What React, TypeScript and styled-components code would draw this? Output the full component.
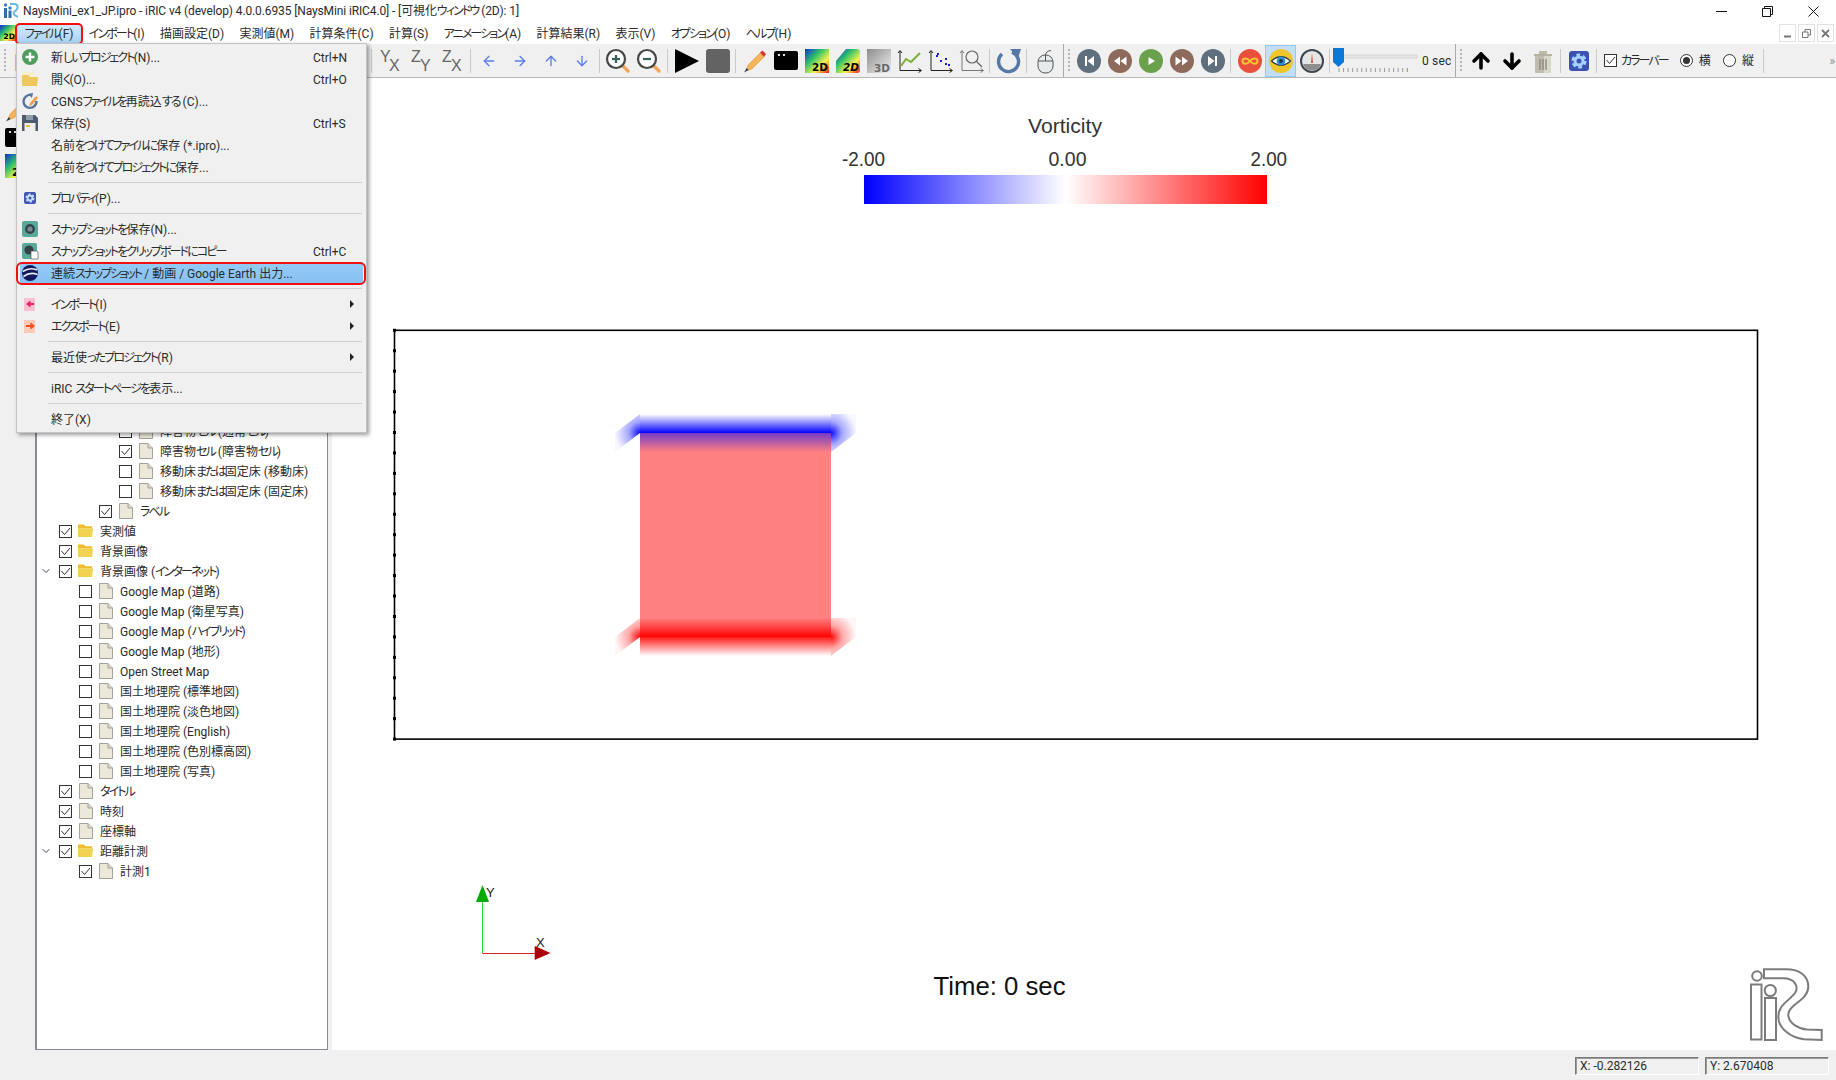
import React from "react";
import styled, { createGlobalStyle } from "styled-components";
import { ArrowDown, ArrowLeft, ArrowRight, ArrowUp, ChevronDown } from "lucide-react";

const Global = createGlobalStyle`
  html, body { margin: 0; padding: 0; background: #f0f0f0; overflow: hidden; }
  body {
    font-family: Roboto, "Noto Sans CJK JP", sans-serif;
    font-size: 12px;
    line-height: 16px;
    font-feature-settings: "palt";
    color: #2b2b2b;
  }
`;

const Page = styled.div`
  position: relative; width: 1836px; height: 1080px; display: flex; flex-direction: column; overflow: hidden;
`;
const KanaRun = styled.span`
  letter-spacing: -1.9px;
`;
const TitleBar = styled.div`
  height: 22px; background: #fff; display: flex; align-items: center; flex: none; padding-left: 3px;
`;
const TitleText = styled.span`
  margin-left: 4px; white-space: nowrap; letter-spacing: -0.12px;
`;
const WinControls = styled.div`
  margin-left: auto; display: flex; align-items: center; height: 22px;
`;
const WinBtn = styled.div`
  width: 46px; height: 20px; display: flex; align-items: center; justify-content: center; color: #111;
`;
const MenuBar = styled.div`
  height: 22px; background: #fff; display: flex; align-items: center; flex: none;
`;
const MenuBarIcon = styled.div`
  width: 17px; height: 22px; flex: none; display: flex; align-items: center;
`;
const MenuTitle = styled.div<{ $on?: boolean }>`
  position: relative; height: 18px; line-height: 18px; padding: 0 7.65px; white-space: nowrap; margin-top: 1px;
  ${(p) => p.$on && `
    background: linear-gradient(#d4e9fb, #a9d2f4);
    &::after { content: ""; position: absolute; inset: -2px -2px -2px -2px; border: 2px solid #f01010; border-radius: 5px; }
  `}
`;
const MdiBtns = styled.div`
  margin-left: auto; margin-right: 2px; display: flex; gap: 2px;
`;
const MdiBtn = styled.div`
  width: 15px; height: 16px; border: 1px solid #e2e2e2; display: flex; align-items: center; justify-content: center; background: #fff;
`;
const ToolBar = styled.div`
  height: 33px; flex: none; background: #f0f0f0; border-bottom: 1px solid #b9b9b9; display: flex; align-items: center; position: relative;
`;
const HiddenGroup = styled.div`
  width: 369px; height: 100%; flex: none; display: flex; align-items: center;
`;
const Grip = styled.div<{ $w: number }>`
  width: ${(p) => p.$w}px; height: 24px; flex: none; position: relative;
  &::before {
    content: ""; position: absolute; left: 4px; top: 0; width: 2px; height: 24px;
    background: repeating-linear-gradient(#b8b8b8 0 2px, transparent 2px 4px);
  }
`;
const ToolBtn = styled.div<{ $active?: boolean }>`
  width: 31px; height: 32px; flex: none; display: flex; align-items: center; justify-content: center; box-sizing: border-box;
  ${(p) => p.$active && `background: #c3def5; border: 1px solid #91c9f7;`}
`;
const Sep = styled.div<{ $l?: number; $r?: number }>`
  width: 1px; height: 24px; flex: none; background: #c9c9c9;
  margin-left: ${(p) => p.$l ?? 2}px; margin-right: ${(p) => p.$r ?? 3}px;
`;
const Break = styled.div`
  width: 1px; height: 33px; flex: none; background: #a9a9a9; margin-left: 2px;
`;
const SecLabel = styled.div`
  width: 31px; flex: none; white-space: nowrap; text-align: left; letter-spacing: 0.2px;
`;
const CheckLabel = styled.label`
  display: flex; align-items: center; gap: 4px; white-space: nowrap; flex: none;
`;
const RadioLabel = styled(CheckLabel)`
  gap: 6px;
`;
const Box = styled.span`
  width: 13px; height: 13px; border: 1px solid #333; box-sizing: border-box; background: #fff; flex: none; display: inline-flex; align-items: center; justify-content: center;
`;
const Radio = styled.span<{ $on?: boolean }>`
  width: 13px; height: 13px; border: 1px solid #333; border-radius: 50%; box-sizing: border-box; background: #fff; flex: none; position: relative;
  ${(p) => p.$on && `&::after { content: ""; position: absolute; inset: 2px; border-radius: 50%; background: #333; }`}
`;
const ColorOpts = styled.div`
  display: flex; align-items: center; margin-left: 4px; gap: 12px; flex: none; width: 157px;
`;
const More = styled.div`
  margin-left: auto; margin-right: 2px; color: #888; font-size: 12px; letter-spacing: -1px;
`;
const Main = styled.div`
  flex: 1; display: flex; min-height: 0;
`;
const Dock = styled.div`
  width: 35px; flex: none; background: #f0f0f0; display: flex; flex-direction: column; gap: 4px; padding: 20px 0 0 5px; box-sizing: border-box;
`;
const TreePanel = styled.div`
  width: 293px; flex: none; margin-top: 12px; background: #fff; box-sizing: border-box;
  border: 1px solid #8b8b95; border-left-width: 2px; padding-top: 330px;
`;
const Strip = styled.div`
  width: 4px; flex: none; background: #f0f0f0;
`;
const Canvas = styled.div`
  flex: 1; background: #fff; min-width: 0;
`;
const PlotSvg = styled.svg`
  display: block; width: 100%; height: 100%;
`;
const Row = styled.div<{ $level: number }>`
  height: 20px; display: flex; align-items: center; padding-left: ${(p) => (p.$level - 1) * 20}px; white-space: nowrap;
`;
const Chevron = styled.span`
  width: 22px; flex: none; display: flex; justify-content: flex-start; padding-left: 3px; box-sizing: border-box; color: #444;
`;
const RowIcon = styled.span`
  width: 15px; margin: 0 7px 0 6px; flex: none; display: flex; justify-content: center;
`;
const StatusBar = styled.div`
  height: 30px; flex: none; background: #f0f0f0; display: flex; justify-content: flex-end; gap: 6px; padding: 7px 7px 0 0; box-sizing: border-box;
`;
const StatusField = styled.div`
  width: 124px; height: 18px; box-sizing: border-box; border: 1px solid; border-color: #7a7a7a #fff #fff #7a7a7a; outline: 0;
  box-shadow: inset 1px 1px 0 #9a9a9a; line-height: 16px; padding-left: 4px; white-space: nowrap;
`;
const Menu = styled.div`
  position: absolute; left: 16px; top: 43px; width: 351px; box-sizing: border-box; background: #f0f0f0;
  border: 1px solid #c4c4c4; box-shadow: 2px 2px 4px rgba(0,0,0,.4); padding: 2px 3px 2px 3px; z-index: 5;
`;
const MenuItem = styled.div<{ $hi?: boolean }>`
  position: relative; height: 22px; display: flex; align-items: center; white-space: nowrap;
  ${(p) => p.$hi && `
    background: linear-gradient(#95cbf7, #86c1f2);
    &::after { content: ""; position: absolute; inset: 0 -3px -1px -4px; border: 2px solid #f01010; border-radius: 6px; }
  `}
`;
const Label = styled.span`
  white-space: nowrap; margin-top: 2px;
`;
const MenuIconSlot = styled.span`
  width: 16px; height: 16px; margin: 0 13px 0 2px; flex: none; display: flex; align-items: center; justify-content: center;
`;
const Shortcut = styled.span`
  margin-left: auto; width: 50px; flex: none; margin-top: 1px;
`;
const SubArrow = styled.span`
  margin-left: auto; margin-right: 9px; width: 0; height: 0; flex: none;
  border-left: 4px solid #222; border-top: 4px solid transparent; border-bottom: 4px solid transparent;
`;
const MenuSep = styled.div`
  height: 9px; display: flex; align-items: center; padding: 0 1px 0 28px;
  &::before { content: ""; flex: 1; height: 1px; background: #cfcfcf; }
`;

/* Kana runs are set tighter than the CJK font's own metrics, as in the original UI font. */
const T = ({ children }: { children: string }) => (
  <>
    {children.split(/([\u3040-\u30ff]+)/).map((part, i) =>
      /[\u3040-\u30ff]/.test(part) ? <KanaRun key={i}>{part}</KanaRun> : part
    )}
  </>
);

/* ---------- icons ---------- */
const Svg = ({ s = 24, children }: { s?: number; children: React.ReactNode }) => (
  <svg width={s} height={s} viewBox={`0 0 ${s} ${s}`} style={{ display: "block", flex: "none", overflow: "visible" }}>{children}</svg>
);
const Defs = () => (
  <svg width="0" height="0" style={{ position: "absolute" }}>
    <defs>
      <linearGradient id="rainbow" x1="0" y1="0" x2="1" y2="1">
        <stop offset="0" stopColor="#1428d8" />
        <stop offset=".35" stopColor="#2cc06a" />
        <stop offset=".68" stopColor="#f6f44c" />
        <stop offset="1" stopColor="#f01a1a" />
      </linearGradient>
      <linearGradient id="gray3d" x1="0" y1="0" x2="1" y2="1">
        <stop offset="0" stopColor="#8c8c8c" />
        <stop offset="1" stopColor="#f0f0f0" />
      </linearGradient>
    </defs>
  </svg>
);
const AxisPair = ({ a, b }: { a: string; b: string }) => (
  <Svg>
    <text x="1" y="13" fontFamily="Liberation Sans, sans-serif" fontSize="16" fill="#666">{a}</text>
    <text x="10" y="22" fontFamily="Liberation Sans, sans-serif" fontSize="16" fill="#666">{b}</text>
  </Svg>
);
const ZoomIcon = ({ plus }: { plus?: boolean }) => (
  <Svg>
    <line x1="15" y1="15" x2="22" y2="22" stroke="#f0a95c" strokeWidth="3.4" strokeLinecap="round" />
    <circle cx="10" cy="10" r="9" fill="#fff" stroke="#474747" strokeWidth="2.2" />
    <line x1="6" y1="10" x2="14" y2="10" stroke="#37605a" strokeWidth="2.2" />
    {plus && <line x1="10" y1="6" x2="10" y2="14" stroke="#37605a" strokeWidth="2.2" />}
  </Svg>
);
const PencilIcon = () => (
  <Svg>
    <path d="M5 16 L17 4 L21 8 L9 20 L3 22 Z" fill="#f5b35c" stroke="#e59a3e" strokeWidth=".6" />
    <path d="M17 3.5 L19.5 1.5 L23 5 L21 8 Z" fill="#d8352d" />
    <path d="M3.8 19 L5.5 21 L1 23.5 Z" fill="#2c3e50" />
  </Svg>
);
const TermIcon = () => (
  <Svg>
    <rect x="0" y="2" width="24" height="19" rx="2" fill="#000" />
    <rect x="4" y="5" width="2" height="2" fill="#ddd" />
    <rect x="9" y="5" width="2" height="2" fill="#ddd" />
  </Svg>
);
const Grad2D = () => (
  <Svg>
    <rect x="0" y="0" width="24" height="24" fill="url(#rainbow)" />
    <text x="23" y="22" textAnchor="end" fontFamily="DejaVu Sans, sans-serif" fontWeight="700" fontSize="10.5" fill="#000">2D</text>
  </Svg>
);
const Grad2DItalic = () => (
  <Svg>
    <path d="M0 12 L10 0 H21 Q24 0 24 3 V21 Q24 24 21 24 H0 Z" fill="url(#rainbow)" />
    <text x="23" y="22" textAnchor="end" fontFamily="DejaVu Sans, sans-serif" fontStyle="italic" fontWeight="700" fontSize="10.5" fill="#000">2D</text>
  </Svg>
);
const Grad3D = () => (
  <Svg>
    <rect x="0" y="0" width="24" height="24" fill="url(#gray3d)" />
    <text x="23" y="23" textAnchor="end" fontFamily="DejaVu Sans, sans-serif" fontWeight="700" fontSize="10.5" fill="#6a6a6a">3D</text>
  </Svg>
);
const Axes = ({ c = "#222" }: { c?: string }) => (
  <g fill="none" stroke={c} strokeWidth="1">
    <path d="M2 2 V21.5 H23" />
    <path d="M0 4 L2 1.5 L4 4 M20.5 19.5 L23.5 21.5 L20.5 23.5" />
  </g>
);
const LineChart = () => (
  <Svg><Axes /><path d="M3 17 L8 10 L13 13 L22 4" fill="none" stroke="#7ab03a" strokeWidth="2" /></Svg>
);
const Scatter = () => (
  <Svg>
    <Axes />
    {[[7, 6], [11, 11], [16, 9], [16, 14], [19, 15], [8, 4]].map(([x, y], i) => (
      <rect key={i} x={x} y={y} width="2" height="2" fill="#1a1ae0" />
    ))}
  </Svg>
);
const ZoomChart = () => (
  <Svg>
    <Axes c="#777" />
    <circle cx="12" cy="8" r="6" fill="none" stroke="#666" strokeWidth="1.2" />
    <line x1="16" y1="12" x2="22" y2="18" stroke="#666" strokeWidth="1.2" />
  </Svg>
);
const RotateIcon = () => (
  <Svg>
    <path d="M15 3.2 A10 10 0 1 1 5 5" fill="none" stroke="#5578a8" strokeWidth="3.4" />
    <path d="M13 0 L24 0 L21 9 Z" fill="#5578a8" />
  </Svg>
);
const MouseIcon = () => (
  <Svg>
    <rect x="4" y="6" width="15" height="18" rx="7" fill="#e6ecec" stroke="#555" strokeWidth="1" />
    <path d="M4 12 H19 M11.5 6 V12 M11.5 6 Q12 2 17 1.5" fill="none" stroke="#555" strokeWidth="1" />
  </Svg>
);
const Player = ({ c, kind }: { c: string; kind: string }) => (
  <Svg>
    <circle cx="12" cy="12" r="12" fill={c} />
    {kind === "first" && <path d="M8 7 H10 V17 H8 Z M17 7 V17 L10.5 12 Z" fill="#fff" />}
    {kind === "last" && <path d="M14 7 H16 V17 H14 Z M7 7 V17 L13.5 12 Z" fill="#fff" />}
    {kind === "rew" && <path d="M12 7.5 V16.5 L6 12 Z M18.5 7.5 V16.5 L12.5 12 Z" fill="#fff" />}
    {kind === "fwd" && <path d="M5.5 7.5 V16.5 L11.5 12 Z M12 7.5 V16.5 L18 12 Z" fill="#fff" />}
    {kind === "play" && <path d="M9.5 8 V16 L16 12 Z" fill="#fff" />}
  </Svg>
);
const Infinity2 = () => (
  <Svg>
    <circle cx="12" cy="12" r="12" fill="#e94f3d" />
    <path d="M12 12 C9.5 8.5 4.5 8.5 4.5 12 C4.5 15.5 9.5 15.5 12 12 C14.5 8.5 19.5 8.5 19.5 12 C19.5 15.5 14.5 15.5 12 12 Z" fill="none" stroke="#f2c531" strokeWidth="2" />
  </Svg>
);
const EyeIcon = () => (
  <Svg>
    <circle cx="12" cy="12" r="12" fill="#eec62c" />
    <path d="M2.5 12 Q12 3.5 21.5 12 Q12 20.5 2.5 12 Z" fill="#fff" stroke="#2d3e50" strokeWidth="1.2" />
    <circle cx="12" cy="12" r="4.4" fill="#2f8fc8" />
    <circle cx="12" cy="12" r="2" fill="#1d3a55" />
  </Svg>
);
const Gauge = () => (
  <Svg>
    <circle cx="12" cy="12" r="11" fill="#e6e6e6" stroke="#3b4650" strokeWidth="2" />
    <path d="M3 15 A9.5 9.5 0 0 0 21 15 Z" fill="#8d8d8d" />
    <path d="M11 14 L12 4 L13 14 Z" fill="#e04535" />
  </Svg>
);
const SliderArt = () => (
  <svg width="89" height="32" viewBox="0 0 89 32" style={{ display: "block", flex: "none" }}>
    <rect x="8" y="10" width="76" height="3" fill="#e6e6e6" stroke="#d4d4d4" />
    {Array.from({ length: 16 }, (_, i) => (
      <line key={i} x1={6 + i * 4.55} y1="23" x2={6 + i * 4.55} y2="27" stroke={i === 15 ? "#8a8a70" : "#9a9a9a"} />
    ))}
    <path d="M0 3 H11 V17 L5.5 22 L0 17 Z" fill="#0a78d7" />
  </svg>
);
const Trash = () => (
  <Svg>
    <rect x="3" y="5" width="18" height="2" fill="#b5b2a2" />
    <rect x="8" y="2" width="8" height="3" fill="#bdbaaa" />
    <path d="M4 7 H20 V23 Q20 24 19 24 H5 Q4 24 4 23 Z" fill="#dad8c8" />
    <path d="M4 7 H13 V24 H5 Q4 24 4 23 Z" fill="#c0bdaf" />
    <path d="M9 10 V21 M12 10 V21 M15 10 V21" stroke="#8d8b7c" strokeWidth="1.4" />
  </Svg>
);
const GearMark = ({ c, r }: { c: string; r: number }) => (
  <g fill="none" stroke={c}>
    <circle r={r} strokeWidth={r * 0.75} />
    <circle r={r * 1.6} strokeWidth={r * 0.6} strokeDasharray={`${r * 0.95} ${r * 0.72}`} />
  </g>
);
const GearIcon = () => (
  <Svg><rect x="1" y="1" width="20" height="20" rx="3" fill="#3c52b2" transform="translate(1 1)" /><g transform="translate(12 12)"><GearMark c="#a6d4ff" r={4} /></g></Svg>
);
const FolderBig = () => (
  <Svg>
    <path d="M1 5 H9 L11 7 H22 V22 H1 Z" fill="#e9c35a" />
  </Svg>
);
const MiniMdi = () => (
  <svg width="16" height="16" viewBox="0 0 16 16" style={{ display: "block" }}>
    <rect width="16" height="16" fill="url(#rainbow)" />
    <text x="15" y="14" textAnchor="end" fontFamily="DejaVu Sans, sans-serif" fontWeight="700" fontSize="7.5" fill="#000">2D</text>
  </svg>
);
const AppLogo = () => (
  <svg width="16" height="18" viewBox="0 0 16 18" style={{ display: "block" }}>
    <circle cx="2.5" cy="3" r="1.7" fill="#3a7ebf" />
    <rect x="1" y="6" width="3" height="10" fill="#2f6fa8" />
    <circle cx="7" cy="6" r="1.7" fill="#3a7ebf" />
    <rect x="5.5" y="8.5" width="3" height="7.5" fill="#2f6fa8" />
    <path d="M7 2 H11 Q15 2 14.5 6 Q14 8 11 10 Q10 12 12 13.5 L15 15" fill="none" stroke="#6bb9e0" strokeWidth="2" />
  </svg>
);
const S = 16;
const NewIcon = () => (
  <Svg s={S}><circle cx="8" cy="8" r="8" fill="#4f9d5e" /><path d="M8 3.5 V12.5 M3.5 8 H12.5" stroke="#fff" strokeWidth="2.4" /></Svg>
);
const OpenIcon = () => (
  <Svg s={S}>
    <path d="M2 1 H12 V8 H2 Z" fill="#f5eecf" />
    <path d="M0 4 H6 L8 6 H16 L15 15 H0 Z" fill="#eec85e" />
  </Svg>
);
const ReloadIcon = () => (
  <Svg s={S}>
    <path d="M9 2 A6.5 6.5 0 1 0 14.5 8" fill="none" stroke="#56759a" strokeWidth="2.4" />
    <path d="M6 1 L11 0 L10 5 Z" fill="#56759a" />
    <path d="M8 10 L14 3 L16 5 L10 12 L7 13 Z" fill="#f0a050" />
  </Svg>
);
const SaveIcon = () => (
  <Svg s={S}>
    <path d="M0 0 H13 L16 3 V16 H0 Z" fill="#4c5c6e" />
    <rect x="4" y="0" width="7" height="5" fill="#8f9dab" />
    <rect x="2.5" y="8" width="11" height="8" fill="#eeeeea" />
    <rect x="4" y="10" width="4" height="2" fill="#e8b94a" />
  </Svg>
);
const PropIcon = () => (
  <Svg s={S}>
    <rect x="1" y="1" width="12" height="12" rx="2" fill="#4156b5" transform="translate(1 1)" />
    <g transform="translate(8 8)"><GearMark c="#c5e2ff" r={2.4} /></g>
  </Svg>
);
const SnapIcon = () => (
  <Svg s={S}>
    <rect width="16" height="16" rx="2" fill="#59a99b" />
    <circle cx="8" cy="8" r="5" fill="#37424a" />
    <circle cx="8" cy="8" r="2.6" fill="#7a8a94" />
  </Svg>
);
const SnapCopyIcon = () => (
  <Svg s={S}>
    <rect width="15" height="16" rx="2" fill="#59a99b" />
    <circle cx="7" cy="7" r="4.6" fill="#37424a" />
    <path d="M9 8 H15 L16 9 V16 H9 Z" fill="#fff" stroke="#444" strokeWidth=".6" />
  </Svg>
);
const GlobeIcon = () => (
  <Svg s={S}>
    <circle cx="8" cy="8" r="8" fill="#12195e" />
    <path d="M0.8 6.5 Q7.5 2 15 5 M1.5 11.5 Q8 6.5 15.5 9.5" fill="none" stroke="#e4eaf6" strokeWidth="1.6" />
  </Svg>
);
const ImportIcon = () => (
  <Svg s={S}>
    <rect x="2" y="2" width="11" height="13" fill="#f9c0d0" />
    <path d="M12 8 H6 M8.5 5.5 L5.5 8 L8.5 10.5" fill="none" stroke="#e8246a" strokeWidth="1.8" />
  </Svg>
);
const ExportIcon = () => (
  <Svg s={S}>
    <rect x="2" y="2" width="11" height="13" fill="#ffc9b8" />
    <path d="M4 8 H11 M8.5 5.5 L11.5 8 L8.5 10.5" fill="none" stroke="#f4511e" strokeWidth="1.8" />
  </Svg>
);
const FileIcon = () => (
  <svg width="14" height="16" viewBox="0 0 14 16" style={{ display: "block" }}>
    <path d="M.5 .5 H9 L13.5 5 V15.5 H.5 Z" fill="#ece9da" stroke="#a3a39a" />
    <path d="M9 .5 V5 H13.5" fill="#dcd9ca" stroke="#a3a39a" />
  </svg>
);
const FolderIcon = () => (
  <svg width="16" height="14" viewBox="0 0 16 14" style={{ display: "block" }}>
    <path d="M0 0 H6 L8 2 H15 V4 H0 Z" fill="#eebc2e" />
    <path d="M0 4 H16 L15 13.5 H0 Z" fill="#f3d152" />
  </svg>
);
const CheckMark = () => (
  <svg width="11" height="11" viewBox="0 0 11 11" style={{ display: "block" }}>
    <path d="M1.5 5 L4.5 8.5 L10 2" fill="none" stroke="#333" strokeWidth="1" />
  </svg>
);

/* ---------- data ---------- */
type TreeRow = { t: string; l: number; on?: boolean; folder?: boolean; open?: boolean };
const tree: TreeRow[] = [
  { t: "障害物セル (通常セル)", l: 4 },
  { t: "障害物セル (障害物セル)", l: 4, on: true },
  { t: "移動床または固定床 (移動床)", l: 4 },
  { t: "移動床または固定床 (固定床)", l: 4 },
  { t: "ラベル", l: 3, on: true },
  { t: "実測値", l: 1, on: true, folder: true },
  { t: "背景画像", l: 1, on: true, folder: true },
  { t: "背景画像 (インターネット)", l: 1, on: true, folder: true, open: true },
  { t: "Google Map (道路)", l: 2 },
  { t: "Google Map (衛星写真)", l: 2 },
  { t: "Google Map (ハイブリッド)", l: 2 },
  { t: "Google Map (地形)", l: 2 },
  { t: "Open Street Map", l: 2 },
  { t: "国土地理院 (標準地図)", l: 2 },
  { t: "国土地理院 (淡色地図)", l: 2 },
  { t: "国土地理院 (English)", l: 2 },
  { t: "国土地理院 (色別標高図)", l: 2 },
  { t: "国土地理院 (写真)", l: 2 },
  { t: "タイトル", l: 1, on: true },
  { t: "時刻", l: 1, on: true },
  { t: "座標軸", l: 1, on: true },
  { t: "距離計測", l: 1, on: true, folder: true, open: true },
  { t: "計測1", l: 2, on: true },
];
const menus = ["インポート(I)", "描画設定(D)", "実測値(M)", "計算条件(C)", "計算(S)", "アニメーション(A)", "計算結果(R)", "表示(V)", "オプション(O)", "ヘルプ(H)"];

const gridTicks = Array.from({ length: 21 }, (_, i) => 330.3 + i * 20.44);

const Band = ({ y, id, c, under }: { y: number; id: string; c: string; under: number }) => (
  <g>
    <defs>
      <linearGradient id={`${id}a`} gradientUnits="userSpaceOnUse" x1="0" y1={y - 19} x2="0" y2={y}>
        <stop offset="0" stopColor={c} stopOpacity="0" />
        <stop offset="1" stopColor={c} stopOpacity="1" />
      </linearGradient>
      <linearGradient id={`${id}b`} gradientUnits="userSpaceOnUse" x1="0" y1={y} x2="0" y2={y + 19}>
        <stop offset="0" stopColor={c} stopOpacity={under} />
        <stop offset="1" stopColor={c} stopOpacity="0" />
      </linearGradient>
      <radialGradient id={`${id}l`} gradientUnits="userSpaceOnUse" cx="640" cy={y} r="25">
        <stop offset="0" stopColor={c} stopOpacity=".95" />
        <stop offset=".45" stopColor={c} stopOpacity=".35" />
        <stop offset="1" stopColor={c} stopOpacity=".03" />
      </radialGradient>
      <radialGradient id={`${id}r`} gradientUnits="userSpaceOnUse" cx="831" cy={y} r="25">
        <stop offset="0" stopColor={c} stopOpacity=".95" />
        <stop offset=".45" stopColor={c} stopOpacity=".35" />
        <stop offset="1" stopColor={c} stopOpacity=".03" />
      </radialGradient>
    </defs>
    <rect x="640" y={y - 19} width="191" height="19" fill={`url(#${id}a)`} />
    <rect x="640" y={y} width="191" height="19" fill={`url(#${id}b)`} />
    <polygon points={`640,${y} 640,${y - 19} 615,${y} 615,${y + 19}`} fill={`url(#${id}l)`} />
    <polygon points={`831,${y} 831,${y - 19} 856,${y - 19} 856,${y} 831,${y + 19}`} fill={`url(#${id}r)`} />
  </g>
);

const vtkFont = "Liberation Sans, sans-serif";

const Plot = () => (
  <PlotSvg viewBox="332 78 1504 972">
    <defs>
      <linearGradient id="cbar">
        <stop offset="0" stopColor="#00f" />
        <stop offset=".5" stopColor="#fff" />
        <stop offset="1" stopColor="#f00" />
      </linearGradient>
    </defs>
    <text x="1028" y="133" fontFamily={vtkFont} fontSize="20" fill="#333" textLength="74" lengthAdjust="spacingAndGlyphs">Vorticity</text>
    <text x="842" y="166" fontFamily={vtkFont} fontSize="20" fill="#333" textLength="43" lengthAdjust="spacingAndGlyphs">-2.00</text>
    <text x="1048.5" y="166" fontFamily={vtkFont} fontSize="20" fill="#333" textLength="38" lengthAdjust="spacingAndGlyphs">0.00</text>
    <text x="1250.5" y="166" fontFamily={vtkFont} fontSize="20" fill="#333" textLength="36.5" lengthAdjust="spacingAndGlyphs">2.00</text>
    <rect x="864" y="175" width="403" height="29" fill="url(#cbar)" />

    <rect x="640" y="433" width="191" height="204" fill="#ff8080" />
    <Band y={433} id="bandB" c="#0000ff" under={0.55} />
    <Band y={637} id="bandR" c="#ff0000" under={0.9} />

    <rect x="394.5" y="330.3" width="1363" height="408.8" fill="none" stroke="#000" strokeWidth="1.6" />
    {gridTicks.map((y) => (
      <rect key={y} x="393" y={y - 1.5} width="3" height="3" fill="#000" />
    ))}

    <line x1="482.5" y1="953" x2="482.5" y2="902" stroke="#22dd22" strokeWidth="1" />
    <polygon points="482.5,885 489,902 476,902" fill="#00aa00" />
    <line x1="482.5" y1="953.5" x2="535" y2="953.5" stroke="#dd2222" strokeWidth="1" />
    <polygon points="550.5,953 534.7,946 534.7,960" fill="#aa0000" />
    <text x="486" y="897" fontFamily={vtkFont} fontSize="13" fill="#222">Y</text>
    <text x="536" y="947" fontFamily={vtkFont} fontSize="13" fill="#222">X</text>

    <text x="933.5" y="995" fontFamily={vtkFont} fontSize="25" fill="#111" textLength="132" lengthAdjust="spacingAndGlyphs">Time: 0 sec</text>

    <g fill="#fff" stroke="#7c7c7c" strokeWidth="2">
      <path d="M1764 969.3 H1786 C1800 969.3 1808.3 976 1808.3 986.7 C1808.3 996 1799 1001 1793.3 1006 C1789 1010 1787.5 1013 1788.5 1016.5 C1790 1024 1799 1029 1807 1029.5 L1821.7 1030 V1040 L1804 1039.3 C1790 1037.5 1778.3 1028 1778.3 1016.7 C1778.3 1005 1789 1001 1795 993 C1799 987 1795 978.3 1783.3 978.3 H1764 Z" />
      <circle cx="1757" cy="976" r="4.8" />
      <rect x="1751" y="984.5" width="10.5" height="55" />
      <circle cx="1770.3" cy="990.5" r="5.6" />
      <rect x="1765" y="998" width="11" height="42" />
    </g>
  </PlotSvg>
);

const App = () => (
  <Page>
    <Global />
    <Defs />
    <TitleBar>
      <AppLogo />
      <TitleText><T>NaysMini_ex1_JP.ipro - iRIC v4 (develop) 4.0.0.6935 [NaysMini iRIC4.0] - [可視化ウィンドウ (2D): 1]</T></TitleText>
      <WinControls>
        <WinBtn>
          <svg width="11" height="11" viewBox="0 0 11 11"><path d="M0 5.5 H11" stroke="#111" /></svg>
        </WinBtn>
        <WinBtn>
          <svg width="11" height="11" viewBox="0 0 11 11"><path d="M.5 2.5 H8.5 V10.5 H.5 Z M2.5 2.5 V.5 H10.5 V8.5 H8.5" fill="none" stroke="#111" /></svg>
        </WinBtn>
        <WinBtn>
          <svg width="11" height="11" viewBox="0 0 11 11"><path d="M.5 .5 L10.5 10.5 M10.5 .5 L.5 10.5" stroke="#111" /></svg>
        </WinBtn>
      </WinControls>
    </TitleBar>

    <MenuBar>
      <MenuBarIcon><MiniMdi /></MenuBarIcon>
      <MenuTitle $on><T>ファイル(F)</T></MenuTitle>
      {menus.map((m) => (
        <MenuTitle key={m}><T>{m}</T></MenuTitle>
      ))}
      <MdiBtns>
        <MdiBtn><svg width="9" height="9" viewBox="0 0 9 9"><path d="M1 7.5 H8" stroke="#777" strokeWidth="2" /></svg></MdiBtn>
        <MdiBtn><svg width="9" height="9" viewBox="0 0 9 9"><path d="M.5 3 H6 V8.5 H.5 Z M3 3 V.5 H8.5 V6 H6" fill="none" stroke="#777" /></svg></MdiBtn>
        <MdiBtn><svg width="9" height="9" viewBox="0 0 9 9"><path d="M1 1 L8 8 M8 1 L1 8" stroke="#777" strokeWidth="1.8" /></svg></MdiBtn>
      </MdiBtns>
    </MenuBar>

    <ToolBar>
      <HiddenGroup>
        <Grip $w={10} />
        <ToolBtn><FolderBig /></ToolBtn>
      </HiddenGroup>
      <Sep />
      <ToolBtn><AxisPair a="Y" b="X" /></ToolBtn>
      <ToolBtn><AxisPair a="Z" b="Y" /></ToolBtn>
      <ToolBtn><AxisPair a="Z" b="X" /></ToolBtn>
      <Sep $r={2} />
      <ToolBtn><ArrowLeft size={16} color="#5a7cec" strokeWidth={2} /></ToolBtn>
      <ToolBtn><ArrowRight size={16} color="#5a7cec" strokeWidth={2} /></ToolBtn>
      <ToolBtn><ArrowUp size={16} color="#5a7cec" strokeWidth={2} /></ToolBtn>
      <ToolBtn><ArrowDown size={16} color="#5a7cec" strokeWidth={2} /></ToolBtn>
      <Sep $r={2} />
      <ToolBtn><ZoomIcon plus /></ToolBtn>
      <ToolBtn><ZoomIcon /></ToolBtn>
      <Sep $l={3} />
      <ToolBtn><Svg><path d="M0 0 L24 12 L0 24 Z" fill="#000" /></Svg></ToolBtn>
      <ToolBtn><Svg><rect width="24" height="24" rx="3" fill="#636363" /></Svg></ToolBtn>
      <Sep />
      <ToolBtn><PencilIcon /></ToolBtn>
      <ToolBtn><TermIcon /></ToolBtn>
      <ToolBtn><Grad2D /></ToolBtn>
      <ToolBtn><Grad2DItalic /></ToolBtn>
      <ToolBtn><Grad3D /></ToolBtn>
      <ToolBtn><LineChart /></ToolBtn>
      <ToolBtn><Scatter /></ToolBtn>
      <ToolBtn><ZoomChart /></ToolBtn>
      <Sep />
      <ToolBtn><RotateIcon /></ToolBtn>
      <Sep />
      <ToolBtn><MouseIcon /></ToolBtn>
      <Break />
      <Grip $w={9} />
      <ToolBtn><Player c="#5f6f7e" kind="first" /></ToolBtn>
      <ToolBtn><Player c="#8d6a5c" kind="rew" /></ToolBtn>
      <ToolBtn><Player c="#6ba04c" kind="play" /></ToolBtn>
      <ToolBtn><Player c="#8d6a5c" kind="fwd" /></ToolBtn>
      <ToolBtn><Player c="#5f6f7e" kind="last" /></ToolBtn>
      <Sep />
      <ToolBtn><Infinity2 /></ToolBtn>
      <ToolBtn $active><EyeIcon /></ToolBtn>
      <ToolBtn><Gauge /></ToolBtn>
      <Sep />
      <SliderArt />
      <SecLabel>0 sec</SecLabel>
      <Break />
      <Grip $w={9} />
      <ToolBtn><ArrowUp size={24} color="#000" strokeWidth={3.6} /></ToolBtn>
      <ToolBtn><ArrowDown size={24} color="#000" strokeWidth={3.6} /></ToolBtn>
      <ToolBtn><Trash /></ToolBtn>
      <Sep $r={2} />
      <ToolBtn><GearIcon /></ToolBtn>
      <Sep />
      <ColorOpts>
        <CheckLabel><Box><CheckMark /></Box><T>カラーバー</T></CheckLabel>
        <RadioLabel><Radio $on />横</RadioLabel>
        <RadioLabel><Radio />縦</RadioLabel>
      </ColorOpts>
      <Sep />
      <More>»</More>
    </ToolBar>

    <Main>
      <Dock>
        <PencilIcon />
        <TermIcon />
        <Grad2D />
      </Dock>
      <TreePanel>
        {tree.map((r) => (
          <Row key={r.t} $level={r.l}>
            <Chevron>{r.open && <ChevronDown size={12} strokeWidth={2} />}</Chevron>
            <Box>{r.on && <CheckMark />}</Box>
            <RowIcon>{r.folder ? <FolderIcon /> : <FileIcon />}</RowIcon>
            <Label><T>{r.t}</T></Label>
          </Row>
        ))}
      </TreePanel>
      <Strip />
      <Canvas><Plot /></Canvas>
    </Main>

    <StatusBar>
      <StatusField>X: -0.282126</StatusField>
      <StatusField>Y: 2.670408</StatusField>
    </StatusBar>

    <Menu>
      <MenuItem><MenuIconSlot><NewIcon /></MenuIconSlot><Label><T>新しいプロジェクト(N)...</T></Label><Shortcut>Ctrl+N</Shortcut></MenuItem>
      <MenuItem><MenuIconSlot><OpenIcon /></MenuIconSlot><Label><T>開く(O)...</T></Label><Shortcut>Ctrl+O</Shortcut></MenuItem>
      <MenuItem><MenuIconSlot><ReloadIcon /></MenuIconSlot><Label><T>CGNSファイルを再読込する (C)...</T></Label></MenuItem>
      <MenuItem><MenuIconSlot><SaveIcon /></MenuIconSlot><Label>保存(S)</Label><Shortcut>Ctrl+S</Shortcut></MenuItem>
      <MenuItem><MenuIconSlot /><Label><T>名前をつけてファイルに保存 (*.ipro)...</T></Label></MenuItem>
      <MenuItem><MenuIconSlot /><Label><T>名前をつけてプロジェクトに保存...</T></Label></MenuItem>
      <MenuSep />
      <MenuItem><MenuIconSlot><PropIcon /></MenuIconSlot><Label><T>プロパティ(P)...</T></Label></MenuItem>
      <MenuSep />
      <MenuItem><MenuIconSlot><SnapIcon /></MenuIconSlot><Label><T>スナップショットを保存(N)...</T></Label></MenuItem>
      <MenuItem><MenuIconSlot><SnapCopyIcon /></MenuIconSlot><Label><T>スナップショットをクリップボードにコピー</T></Label><Shortcut>Ctrl+C</Shortcut></MenuItem>
      <MenuItem $hi><MenuIconSlot><GlobeIcon /></MenuIconSlot><Label><T>連続スナップショット / 動画 / Google Earth 出力...</T></Label></MenuItem>
      <MenuSep />
      <MenuItem><MenuIconSlot><ImportIcon /></MenuIconSlot><Label><T>インポート(I)</T></Label><SubArrow /></MenuItem>
      <MenuItem><MenuIconSlot><ExportIcon /></MenuIconSlot><Label><T>エクスポート(E)</T></Label><SubArrow /></MenuItem>
      <MenuSep />
      <MenuItem><MenuIconSlot /><Label><T>最近使ったプロジェクト(R)</T></Label><SubArrow /></MenuItem>
      <MenuSep />
      <MenuItem><MenuIconSlot /><Label><T>iRIC スタートページを表示...</T></Label></MenuItem>
      <MenuSep />
      <MenuItem><MenuIconSlot /><Label><T>終了(X)</T></Label></MenuItem>
    </Menu>
  </Page>
);

export default App;
